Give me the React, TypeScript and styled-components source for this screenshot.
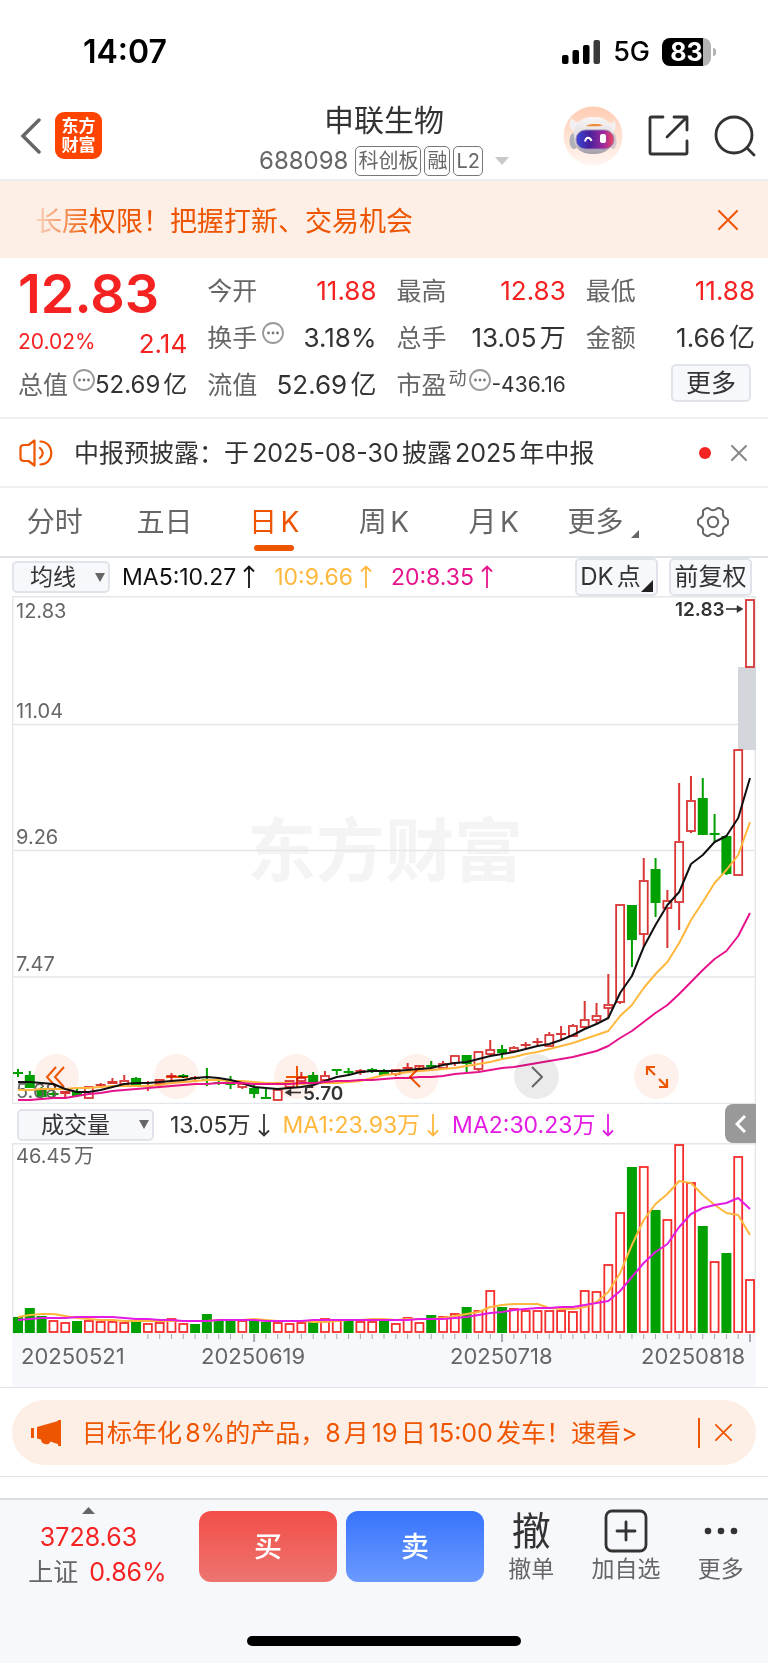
import React from 'react';
import styled, { createGlobalStyle } from 'styled-components';

const color = {
  orange: '#ee5500',
  peach: '#fdeee6',
  red: '#f52222',
  ink: '#333333',
  grey: '#666666',
  line: '#e4e6ea',
  panel: '#f7f8fb',
  amber: '#ffb83d',
  pink: '#e6148c',
  violet: '#e31be3',
  up: '#d93636',
  upBar: '#f52d2d',
  down: '#00a000',
};

const fontStack = "Inter, 'Noto Sans CJK SC', sans-serif";

const GlobalStyle = createGlobalStyle`
  *, *::before, *::after { box-sizing: border-box; }
  body {
    margin: 0;
    background: #fff;
    color: ${color.ink};
    font-family: ${fontStack};
    text-autospace: normal;
  }
  button, select {
    font-family: inherit;
    color: inherit;
    border: 0;
    background: none;
    padding: 0;
    margin: 0;
  }
  svg { display: block; flex: none; }
  h1, p, dl, dt, dd { margin: 0; font-weight: 400; }
`;

const Page = styled.div`
  display: flex;
  flex-direction: column;
  width: 100%;
`;

/* ---------- status bar ---------- */

const StatusBar = styled.div`
  display: flex;
  align-items: center;
  justify-content: space-between;
  height: 98px;
  padding: 6px 52px 0 83px;
  color: #000;
`;

const Clock = styled.span`
  font-size: 32px;
  line-height: 40px;
  font-weight: 600;
`;

const StatusIcons = styled.div`
  display: flex;
  align-items: center;
  gap: 12px;
`;

const Network = styled.span`
  font-size: 27px;
  line-height: 32px;
  font-weight: 500;
`;

const Battery = styled.div`
  display: flex;
  align-items: center;
  gap: 2px;
`;

const BatteryBody = styled.span`
  width: 49px;
  height: 28px;
  border-radius: 8px;
  background: linear-gradient(90deg, #000 83%, #b3b3b3 83%);
  color: #fff;
  font-size: 25px;
  line-height: 28px;
  font-weight: 700;
  text-align: center;
`;

const BatteryTip = styled.span`
  width: 3px;
  height: 8px;
  border-radius: 0 4px 4px 0;
  background: #b3b3b3;
`;

/* ---------- header ---------- */

const Header = styled.header`
  display: grid;
  grid-template-columns: 1fr auto 1fr;
  align-items: center;
  height: 83px;
  padding: 0 12px;
  border-bottom: 2px solid #ebedf0;
`;

const HeaderSide = styled.div<{ $end?: boolean }>`
  display: flex;
  align-items: center;
  justify-content: ${(p) => (p.$end ? 'flex-end' : 'flex-start')};
  gap: ${(p) => (p.$end ? '25px' : '14px')};
  padding: 0 0 6px ${(p) => (p.$end ? '0' : '8px')};
`;

const IconButton = styled.button`
  display: flex;
  align-items: center;
  justify-content: center;
  flex: none;
  cursor: pointer;
`;

const Logo = styled.a`
  display: grid;
  place-content: center;
  width: 47px;
  height: 47px;
  border-radius: 9px;
  background: #ff4400;
  color: #fff;
  font-size: 17px;
  line-height: 19px;
  font-weight: 700;
  text-align: center;
  text-decoration: none;
`;

const TitleBlock = styled.div`
  display: flex;
  flex-direction: column;
  align-items: center;
  gap: 7px;
`;

const StockName = styled.h1`
  font-size: 30px;
  line-height: 38px;
`;

const CodeRow = styled.div`
  display: flex;
  align-items: center;
  gap: 3px;
  color: ${color.grey};
  font-size: 24px;
  line-height: 30px;
`;

const Code = styled.span`
  margin-right: 4px;
`;

const Badge = styled.span`
  padding: 0 2px;
  border: 1px solid #777;
  border-radius: 5px;
  font-size: 20px;
  line-height: 28px;
`;

const CodeArrow = styled.svg`
  margin-left: 9px;
`;

/* ---------- promotional marquee ---------- */

const Marquee = styled.div`
  display: flex;
  align-items: center;
  justify-content: space-between;
  height: 77px;
  padding: 0 30px 0 35px;
  background: ${color.peach};
  color: ${color.orange};
`;

const MarqueeText = styled.p`
  font-size: 27px;
  line-height: 40px;
  padding-top: 4px;
  mask-image: linear-gradient(90deg, rgba(0, 0, 0, 0.15), #000 56px);
`;

/* ---------- quote ---------- */

const Quote = styled.section`
  display: grid;
  grid-template-columns: repeat(4, minmax(0, 1fr));
  column-gap: 20px;
  padding: 9px 13px 9px 18px;
  border-bottom: 2px solid #eef0f2;
`;

const QuoteColumn = styled.dl`
  display: flex;
  flex-direction: column;
`;

const Cell = styled.div`
  display: flex;
  align-items: center;
  justify-content: space-between;
  height: 47px;
`;

const Label = styled.dt<{ $tight?: boolean }>`
  display: flex;
  align-items: center;
  gap: ${(p) => (p.$tight ? '2px' : '5px')};
  color: ${color.grey};
  font-size: 25px;
  line-height: 36px;
  white-space: nowrap;
`;

const valueSize = { small: '21px', medium: '24px', large: '26px' };

const Value = styled.dd<{ $up?: boolean; $size?: keyof typeof valueSize }>`
  color: ${(p) => (p.$up ? color.red : color.ink)};
  font-size: ${(p) => valueSize[p.$size ?? 'large']};
  line-height: 36px;
  white-space: nowrap;
`;

const Price = styled.div`
  height: 54px;
  color: ${color.red};
  font-size: 54px;
  line-height: 54px;
  font-weight: 600;
`;

const Change = styled.div`
  display: flex;
  align-items: center;
  justify-content: space-between;
  height: 40px;
  color: ${color.red};
  font-size: 21px;
`;

const ChangeAmount = styled.span`
  padding-top: 6px;
  font-size: 26px;
  line-height: 30px;
`;

const Sup = styled.small`
  align-self: flex-start;
  font-size: 18px;
  line-height: 24px;
`;

const InfoIcon = styled.svg`
  margin-bottom: 10px;
`;

const MoreButton = styled.button`
  width: 80px;
  height: 38px;
  margin: 0 4px 4px auto;
  border: 2px solid #e0e4ea;
  border-radius: 5px;
  background: ${color.panel};
  font-size: 25px;
  line-height: 34px;
`;

/* ---------- notice ---------- */

const Notice = styled.div`
  display: flex;
  align-items: center;
  height: 69px;
  padding: 0 21px 0 19px;
  border-bottom: 2px solid #eef0f2;
`;

const NoticeText = styled.p`
  flex: 1;
  padding-left: 21px;
  font-size: 25px;
  line-height: 36px;
`;

const Dot = styled.span`
  width: 12px;
  height: 12px;
  margin-right: 20px;
  border-radius: 50%;
  background: ${color.red};
`;

/* ---------- period tabs ---------- */

const Tabs = styled.nav`
  display: grid;
  grid-template-columns: repeat(7, minmax(0, 1fr));
  height: 70px;
  border-bottom: 2px solid #dfe2e8;
`;

const Tab = styled.button<{ $active?: boolean }>`
  position: relative;
  display: flex;
  align-items: center;
  justify-content: center;
  gap: 8px;
  color: ${(p) => (p.$active ? color.orange : color.grey)};
  font-size: 28px;
  line-height: 40px;
  &::after {
    content: '';
    display: ${(p) => (p.$active ? 'block' : 'none')};
    position: absolute;
    bottom: 5px;
    left: calc(50% - 20px);
    width: 40px;
    height: 6px;
    border-radius: 3px;
    background: ${color.orange};
  }
`;

const Corner = styled.span<{ $dark?: boolean }>`
  align-self: flex-end;
  width: 0;
  height: 0;
  border-left: ${(p) => (p.$dark ? '12px' : '8px')} solid transparent;
  border-bottom: ${(p) => (p.$dark ? '12px' : '8px')} solid
    ${(p) => (p.$dark ? '#222' : color.grey)};
  margin-bottom: ${(p) => (p.$dark ? '2px' : '18px')};
`;

/* ---------- indicator rows ---------- */

const IndicatorRow = styled.section<{ $volume?: boolean }>`
  display: flex;
  align-items: center;
  height: ${(p) => (p.$volume ? '39px' : '38px')};
  margin: 0 12px;
`;

const SelectWrap = styled.label<{ $wide?: boolean }>`
  display: flex;
  align-items: center;
  position: relative;
  width: ${(p) => (p.$wide ? '137px' : '98px')};
  margin: ${(p) => (p.$wide ? '2px 16px 0 5px' : '0 12px 0 0')};
`;

const Select = styled.select<{ $wide?: boolean }>`
  appearance: none;
  width: 100%;
  height: 32px;
  padding-left: ${(p) => (p.$wide ? '22px' : '16px')};
  border: 2px solid #e0e4ea;
  border-radius: 5px;
  background: ${color.panel};
  font-size: 23px;
  line-height: 28px;
`;

const SelectArrow = styled.svg`
  position: absolute;
  right: 5px;
  pointer-events: none;
`;

const Reading = styled.span<{ $tone: string }>`
  display: flex;
  align-items: center;
  gap: 7px;
  margin-right: 19px;
  color: ${(p) => p.$tone};
  font-size: 23px;
  line-height: 32px;
  white-space: nowrap;
  text-autospace: no-autospace;
`;

const VolumeReading = styled(Reading)`
  margin-right: 13px;
  padding-top: 3px;
`;

const RowActions = styled.div`
  display: flex;
  gap: 11px;
  margin: 0 4px 0 auto;
`;

const ChipButton = styled.button`
  display: flex;
  align-items: center;
  justify-content: center;
  width: 83px;
  height: 38px;
  border: 2px solid #e0e4ea;
  border-radius: 5px;
  background: ${color.panel};
  font-size: 24px;
  line-height: 34px;
  white-space: nowrap;
`;

const CollapseButton = styled.button`
  display: flex;
  align-items: center;
  justify-content: center;
  width: 31px;
  height: 39px;
  margin-left: auto;
  border-radius: 8px 0 0 8px;
  background: #999;
`;

/* ---------- charts ---------- */

const ChartFrame = styled.div`
  position: relative;
  margin: 0 12px;
`;

const Drawing = styled.svg`
  width: 100%;
  height: auto;
  font-family: ${fontStack};
`;

const FloatBar = styled.div`
  position: absolute;
  left: 22px;
  right: 77px;
  bottom: 5px;
  display: flex;
  justify-content: space-between;
  mix-blend-mode: multiply;
`;

const FloatButton = styled.button<{ $muted?: boolean }>`
  display: flex;
  align-items: center;
  justify-content: center;
  width: 45px;
  height: 45px;
  border-radius: 50%;
  background: ${(p) => (p.$muted ? '#ebebeb' : '#fef1eb')};
`;

/* ---------- product promotion ---------- */

const PromoSection = styled.section`
  padding: 12px 12px 11px;
  border-top: 1px solid #dfe2e6;
  border-bottom: 1px solid #dfe2e6;
`;

const Promo = styled.div`
  display: flex;
  align-items: center;
  height: 65px;
  padding: 0 24px 0 19px;
  border-radius: 33px;
  background: ${color.peach};
  color: ${color.orange};
`;

const PromoText = styled.a`
  flex: 1;
  padding-left: 19px;
  color: inherit;
  font-size: 25px;
  line-height: 36px;
  text-decoration: none;
  white-space: nowrap;
`;

const PromoClose = styled(IconButton)`
  height: 30px;
  padding-left: 15px;
  border-left: 2px solid ${color.orange};
`;

/* ---------- bottom bar ---------- */

const BottomBar = styled.footer`
  margin-top: 21px;
  border-top: 2px solid #dcdfe3;
  background: ${color.panel};
`;

const Actions = styled.div`
  display: grid;
  grid-template-columns: 199px 1fr 284px;
  height: 92px;
`;

const IndexBox = styled.button`
  display: flex;
  flex-direction: column;
  align-items: center;
  padding: 7px 22px 0 0;
  font-size: 25px;
`;

const IndexLine = styled.span<{ $change?: boolean }>`
  display: flex;
  gap: 11px;
  padding: ${(p) => (p.$change ? '0 0 0 18px' : '6px 0 0')};
  line-height: 35px;
  color: ${color.red};
`;

const IndexName = styled.span`
  color: ${color.grey};
`;

const TradeGroup = styled.div`
  display: grid;
  grid-template-columns: 1fr 1fr;
  column-gap: 9px;
  padding-top: 11px;
`;

const TradeButton = styled.button<{ $sell?: boolean }>`
  height: 71px;
  border-radius: 12px;
  background: ${(p) =>
    p.$sell
      ? 'linear-gradient(180deg, #3875fc, #6b99ff)'
      : 'linear-gradient(180deg, #f44e48, #ec7570)'};
  color: #fff;
  font-size: 28px;
  line-height: 40px;
  font-weight: 500;
`;

const ToolGroup = styled.div`
  display: grid;
  grid-template-columns: repeat(3, 1fr);
`;

const ToolButton = styled.button`
  display: flex;
  flex-direction: column;
  align-items: center;
  padding-top: 8px;
  color: ${color.grey};
  font-size: 23px;
  line-height: 33px;
  white-space: nowrap;
`;

const ToolGlyph = styled.span`
  display: flex;
  align-items: center;
  height: 45px;
  color: ${color.ink};
  font-size: 39px;
`;

const HomeArea = styled.div`
  display: flex;
  justify-content: center;
  align-items: flex-end;
  height: 71px;
  padding-bottom: 17px;
`;

const HomeIndicator = styled.span`
  width: 274px;
  height: 10px;
  border-radius: 5px;
  background: #000;
`;

/* ---------- chart data ---------- */

const FIRST_X = 18;
const STEP = 732 / 62;
const xAt = (i: number) => FIRST_X + STEP * i;

type Kind = 'r' | 'g';
// kind, body top, body bottom, wick top, wick bottom
type Candle = [Kind, number, number, number, number];

const candles: Candle[] = [
  ['g', 1072, 1074, 1069, 1077], ['g', 1075, 1088, 1071, 1088], ['g', 1089, 1097, 1087, 1098],
  ['g', 1093, 1095, 1088, 1098], ['r', 1091, 1094, 1091, 1099], ['g', 1091, 1096, 1089, 1097],
  ['r', 1086, 1098, 1086, 1098], ['r', 1084, 1086, 1083, 1087], ['r', 1081, 1084, 1078, 1084],
  ['r', 1080, 1084, 1075, 1084], ['g', 1078, 1086, 1077, 1087], ['r', 1085, 1087, 1081, 1091],
  ['r', 1079, 1084, 1079, 1084], ['r', 1075, 1077, 1073, 1080], ['g', 1075, 1077, 1074, 1078],
  ['r', 1077, 1079, 1076, 1080], ['g', 1079, 1081, 1068, 1086], ['g', 1082, 1084, 1081, 1085],
  ['g', 1080, 1085, 1076, 1089], ['r', 1083, 1087, 1083, 1089], ['g', 1088, 1094, 1085, 1098],
  ['g', 1097, 1099, 1088, 1099], ['r', 1089, 1100, 1089, 1100], ['r', 1080, 1087, 1080, 1087],
  ['r', 1077, 1081, 1072, 1083], ['g', 1075, 1082, 1072, 1082], ['r', 1075, 1080, 1071, 1080],
  ['g', 1069, 1071, 1069, 1075], ['g', 1071, 1073, 1068, 1075], ['r', 1070, 1073, 1069, 1075],
  ['g', 1069, 1071, 1068, 1073], ['g', 1071, 1075, 1069, 1076], ['r', 1069, 1074, 1069, 1076],
  ['r', 1067, 1069, 1063, 1070], ['r', 1065, 1069, 1065, 1069], ['g', 1065, 1067, 1061, 1068],
  ['r', 1063, 1068, 1061, 1068], ['r', 1055, 1063, 1055, 1066], ['g', 1055, 1064, 1055, 1073],
  ['r', 1051, 1069, 1051, 1071], ['r', 1049, 1054, 1040, 1055], ['g', 1049, 1053, 1045, 1059],
  ['r', 1047, 1051, 1046, 1052], ['r', 1044, 1046, 1042, 1048], ['r', 1041, 1043, 1038, 1046],
  ['r', 1034, 1046, 1032, 1046], ['r', 1033, 1035, 1026, 1039], ['r', 1025, 1036, 1024, 1036],
  ['r', 1019, 1027, 1001, 1029], ['r', 1015, 1020, 1003, 1023], ['r', 1004, 1008, 974, 1018],
  ['r', 904, 1002, 904, 1004], ['g', 905, 940, 905, 967], ['r', 880, 934, 858, 947],
  ['g', 869, 903, 858, 917], ['r', 900, 908, 890, 948], ['r', 841, 902, 783, 930],
  ['r', 800, 831, 776, 833], ['g', 798, 835, 778, 835], ['g', 833, 835, 814, 843],
  ['g', 836, 874, 835, 875], ['r', 749, 875, 749, 875], ['r', 599, 667, 599, 667],
];

const ma5 = [
  1082, 1082, 1083, 1084, 1089, 1092, 1092, 1090, 1087, 1084, 1083, 1083, 1082, 1081, 1080, 1078,
  1077, 1078, 1080, 1083, 1087, 1088, 1089, 1088, 1087, 1085, 1081, 1077, 1075, 1072, 1071, 1071,
  1071, 1070, 1069, 1068, 1065, 1063, 1062, 1059, 1056, 1054, 1052, 1049, 1046, 1044, 1040, 1035,
  1029, 1024, 1018, 993, 976, 947, 925, 905, 892, 864, 855, 842, 836, 818, 778,
];
const ma10 = [
  1090, 1090, 1089, 1089, 1089, 1088, 1088, 1087, 1086, 1086, 1086, 1086, 1085, 1083, 1082, 1081,
  1080, 1080, 1081, 1081, 1082, 1083, 1083, 1083, 1084, 1083, 1083, 1083, 1082, 1081, 1078, 1075,
  1074, 1072, 1071, 1070, 1069, 1068, 1066, 1064, 1062, 1059, 1057, 1054, 1052, 1049, 1046, 1043,
  1039, 1035, 1031, 1016, 1005, 988, 974, 962, 943, 920, 902, 883, 870, 855, 822,
];
const ma20 = [
  1100, 1100, 1099, 1098, 1098, 1096, 1094, 1093, 1091, 1090, 1089, 1088, 1087, 1086, 1085, 1084,
  1084, 1083, 1083, 1083, 1084, 1084, 1084, 1084, 1083, 1083, 1082, 1081, 1081, 1080, 1080, 1079,
  1078, 1078, 1077, 1077, 1076, 1074, 1073, 1072, 1070, 1068, 1067, 1065, 1063, 1061, 1059, 1057,
  1054, 1051, 1046, 1038, 1031, 1022, 1013, 1005, 994, 982, 970, 959, 951, 936, 913,
];

const volumes = [
  1317, 1308, 1316, 1320, 1322, 1321, 1320, 1321, 1321, 1322, 1321, 1323, 1322, 1318, 1323, 1324,
  1314, 1321, 1321, 1320, 1321, 1322, 1322, 1323, 1322, 1321, 1318, 1320, 1320, 1321, 1321, 1320,
  1323, 1317, 1322, 1315, 1316, 1313, 1307, 1310, 1290, 1307, 1308, 1310, 1310, 1310, 1310, 1311,
  1290, 1291, 1264, 1212, 1167, 1166, 1210, 1219, 1144, 1182, 1226, 1261, 1253, 1156, 1279,
];
const volumeGreen = new Set([0, 1, 2, 5, 10, 15, 16, 17, 18, 20, 21, 25, 28, 31, 35, 38, 41, 52, 54, 58, 60]);
const volMa1 = [
  1317, 1315, 1314, 1314, 1316, 1318, 1319, 1320, 1320, 1321, 1321, 1321, 1321, 1321, 1321, 1321,
  1321, 1320, 1320, 1320, 1319, 1320, 1321, 1321, 1321, 1322, 1322, 1321, 1320, 1320, 1319, 1319,
  1320, 1319, 1319, 1319, 1318, 1316, 1314, 1312, 1307, 1305, 1304, 1304, 1304, 1308, 1309, 1309,
  1307, 1302, 1292, 1273, 1245, 1220, 1204, 1194, 1181, 1183, 1195, 1205, 1213, 1215, 1235,
];
const volMa2 = [
  1320, 1319, 1318, 1318, 1318, 1317, 1317, 1317, 1317, 1318, 1319, 1319, 1320, 1320, 1321, 1321,
  1321, 1320, 1320, 1320, 1320, 1321, 1321, 1321, 1321, 1320, 1320, 1320, 1320, 1320, 1320, 1320,
  1320, 1320, 1319, 1319, 1319, 1318, 1317, 1315, 1313, 1312, 1310, 1309, 1308, 1308, 1307, 1307,
  1305, 1303, 1301, 1291, 1277, 1263, 1252, 1244, 1227, 1214, 1208, 1205, 1203, 1198, 1209,
];

const toPoints = (ys: number[]) => ys.map((y, i) => `${xAt(i).toFixed(1)},${y}`).join(' ');

function Line({ ys, stroke }: { ys: number[]; stroke: string }) {
  return <polyline points={toPoints(ys)} fill="none" stroke={stroke} strokeWidth="2" strokeLinejoin="round" />;
}

function CandleMark({ index, candle }: { index: number; candle: Candle }) {
  const [kind, top, bottom, high, low] = candle;
  const x = xAt(index);
  if (kind === 'g') {
    return (
      <g fill={color.down}>
        <rect x={x - 1} y={high} width="2" height={low - high} />
        <rect x={x - 5} y={top} width="10" height={bottom - top} />
      </g>
    );
  }
  const flat = bottom - top < 4;
  return (
    <g fill={color.up}>
      <rect x={x - 1} y={high} width="2" height={Math.max(top - high, 0)} />
      <rect x={x - 1} y={bottom} width="2" height={Math.max(low - bottom, 0)} />
      {flat ? (
        <rect x={x - 5} y={top} width="10" height={bottom - top} />
      ) : (
        <rect x={x - 4} y={top + 1} width="8" height={bottom - top - 1} fill="none" stroke={color.up} strokeWidth="1.8" />
      )}
    </g>
  );
}

function PriceChart() {
  const labels: [string, number][] = [['12.83', 618], ['11.04', 718], ['9.26', 844], ['7.47', 971], ['5.68', 1098]];
  return (
    <Drawing viewBox="12 596 744 508" role="img" aria-label="日K线图">
      <text x="385" y="876" textAnchor="middle" fontSize="69" fontWeight="700" fill="#f4f4f5">东方财富</text>
      <g fill="none" stroke={color.line} strokeWidth="1.5">
        <path d="M12.7 1104V596.7H755.3V1104" />
        <path d="M12 724.5H756M12 850.5H756M12 977H756M12 1103.5H756" />
      </g>
      <rect x="738" y="667" width="18" height="83" fill="#d3d6db" />
      {candles.map((c, i) => (
        <CandleMark key={i} index={i} candle={c} />
      ))}
      <g fontSize="20" fill={color.grey}>
        {labels.map(([t, y]) => (
          <text key={t} x="16" y={y}>{t}</text>
        ))}
      </g>
      <Line ys={ma10} stroke={color.amber} />
      <Line ys={ma5} stroke="#111" />
      <Line ys={ma20} stroke={color.pink} />
      <g fontSize="19" fontWeight="600" fill={color.ink}>
        <text x="675" y="616">12.83</text>
        <text x="303" y="1100">5.70</text>
      </g>
      <g stroke={color.ink} strokeWidth="1.6" fill={color.ink}>
        <path d="M726 609H738" />
        <path d="M737 605.5L743 609L737 612.5Z" strokeWidth="0.5" />
        <path d="M290 1092.5H301" />
        <path d="M291 1089L285 1092.5L291 1096Z" strokeWidth="0.5" />
      </g>
    </Drawing>
  );
}

function VolumeChart() {
  const dates: [string, number][] = [['20250521', 21], ['20250619', 201], ['20250718', 450], ['20250818', 641]];
  return (
    <Drawing viewBox="12 1143 744 244" role="img" aria-label="成交量图">
      <rect x="12" y="1333" width="744" height="54" fill={color.panel} />
      <path d="M12.7 1333V1143.7H755.3V1333" fill="none" stroke={color.line} strokeWidth="1.5" />
      <text x="16" y="1163" fontSize="20" fill={color.grey}>46.45万</text>
      {volumes.map((top, i) =>
        volumeGreen.has(i) ? (
          <rect key={i} x={xAt(i) - 5} y={top} width="10" height={1333 - top} fill={color.down} />
        ) : (
          <rect key={i} x={xAt(i) - 4} y={top + 1} width="8" height={1331 - top} fill="none" stroke={color.upBar} strokeWidth="1.8" />
        ),
      )}
      <Line ys={volMa1} stroke={color.amber} />
      <Line ys={volMa2} stroke={color.violet} />
      <g fill="#a6a8ad">
        {volumes.map((_, i) => {
          const major = i === 20 || i === 41 || i === 62;
          return i < 11 ? null : <rect key={i} x={xAt(i) - (major ? 1 : 0.5)} y="1334" width={major ? 2 : 1} height={major ? 8 : 5} />;
        })}
      </g>
      <g fontSize="22" fill={color.grey}>
        {dates.map(([t, x]) => (
          <text key={t} x={x} y="1364">{t}</text>
        ))}
      </g>
    </Drawing>
  );
}

/* ---------- icons ---------- */

function Cross({ size, width }: { size: number; width: number }) {
  return (
    <svg width={size} height={size} viewBox="0 0 20 20" fill="none" stroke="currentColor" strokeWidth={width} strokeLinecap="round">
      <path d="M1 1L19 19M19 1L1 19" />
    </svg>
  );
}

function Arrow({ down }: { down?: boolean }) {
  return (
    <svg width="12" height="24" viewBox="0 0 12 24" fill="none" stroke="currentColor" strokeWidth="1.8">
      <path d={down ? 'M6 1V23M1 17.5L6 22.5L11 17.5' : 'M6 23V1M1 6.5L6 1.5L11 6.5'} />
    </svg>
  );
}

function Caret() {
  return (
    <SelectArrow width="10" height="9" viewBox="0 0 10 9" fill={color.grey}>
      <path d="M0 0H10L5 9Z" />
    </SelectArrow>
  );
}

function Info() {
  return (
    <InfoIcon width="22" height="22" viewBox="0 0 22 22" fill="none" stroke="#999" strokeWidth="1.8">
      <circle cx="11" cy="11" r="10" />
      <g fill="#777" stroke="none">
        <circle cx="6.5" cy="11" r="1.4" />
        <circle cx="11" cy="11" r="1.4" />
        <circle cx="15.5" cy="11" r="1.4" />
      </g>
    </InfoIcon>
  );
}

function Robot() {
  return (
    <svg width="60" height="60" viewBox="0 0 60 60">
      <defs>
        <linearGradient id="halo" x1="0" y1="0" x2="0" y2="1">
          <stop offset="0" stopColor="#ffccb3" />
          <stop offset="1" stopColor="#fff6f2" />
        </linearGradient>
        <linearGradient id="visor" x1="0" y1="0" x2="1" y2="0">
          <stop offset="0" stopColor="#3b49d8" />
          <stop offset="0.35" stopColor="#45209a" />
          <stop offset="0.75" stopColor="#a52a9b" />
          <stop offset="1" stopColor="#f0485a" />
        </linearGradient>
        <linearGradient id="shell" x1="0" y1="0" x2="0" y2="1">
          <stop offset="0" stopColor="#f8f5f5" />
          <stop offset="0.6" stopColor="#dfdbdf" />
          <stop offset="1" stopColor="#a09ca8" />
        </linearGradient>
      </defs>
      <circle cx="30" cy="30" r="29.5" fill="url(#halo)" />
      <ellipse cx="11" cy="35" rx="4.5" ry="8" fill="#b0b0b8" />
      <ellipse cx="50" cy="35" rx="3.5" ry="8" fill="#d8c8cc" />
      <path d="M9 12C5 17 6 22 11 25L20 14C14 17 11 16 9 12ZM51 14C54 19 53 24 49 27L42 14C47 18 50 18 51 14Z" fill="#f3f0f1" />
      <path d="M30 11C42 10 50 17 50 30C51 42 43 48 30 48C17 48 11 42 11 31C10 18 18 11 30 11Z" fill="url(#shell)" />
      <path d="M23 20C27 17.5 36 17.5 40 19.5C36 20.5 28 20.5 23 20Z" fill="#f18a35" />
      <rect x="13" y="24" width="38" height="19" rx="9.5" fill="url(#visor)" stroke="#9f86b5" strokeWidth="1" />
      <path d="M22 35.5C23 30.5 27 30.5 28.5 35" fill="none" stroke="#fff" strokeWidth="2" />
      <rect x="37" y="28" width="6" height="9" rx="2" fill="#fff" />
    </svg>
  );
}

export default function App() {
  return (
    <>
      <GlobalStyle />
      <Page>
        <StatusBar>
          <Clock>14:07</Clock>
          <StatusIcons>
            <svg width="39" height="25" viewBox="0 0 39 25">
              <rect x="0" y="15" width="6.5" height="9" rx="2" />
              <rect x="10.5" y="10" width="6.5" height="14" rx="2" />
              <rect x="21" y="5" width="6.5" height="19" rx="2" />
              <rect x="31.5" y="0" width="6.5" height="24" rx="2" fill="#3a3a3a" />
            </svg>
            <Network>5G</Network>
            <Battery>
              <BatteryBody>83</BatteryBody>
              <BatteryTip />
            </Battery>
          </StatusIcons>
        </StatusBar>

        <Header>
          <HeaderSide>
            <IconButton aria-label="返回">
              <svg width="21" height="36" viewBox="0 0 21 36" fill="none" stroke="#666" strokeWidth="3.5" strokeLinecap="round">
                <path d="M19 2L3 18L19 34" />
              </svg>
            </IconButton>
            <Logo href="#">东方<br />财富</Logo>
          </HeaderSide>
          <TitleBlock>
            <StockName>申联生物</StockName>
            <CodeRow>
              <Code>688098</Code>
              <Badge>科创板</Badge>
              <Badge>融</Badge>
              <Badge>L2</Badge>
              <CodeArrow width="14" height="8" viewBox="0 0 14 8" fill="#c8c8c8">
                <path d="M0 0H14L7 8Z" />
              </CodeArrow>
            </CodeRow>
          </TitleBlock>
          <HeaderSide $end>
            <IconButton aria-label="智能助手"><Robot /></IconButton>
            <IconButton aria-label="分享">
              <svg width="41" height="41" viewBox="0 0 41 41" fill="none" stroke="#333" strokeWidth="2.8" strokeLinecap="round" strokeLinejoin="round">
                <path d="M15 2H3.5Q2 2 2 3.5V37.5Q2 39 3.5 39H37.5Q39 39 39 37.5V26M26 2H39V15M39 2L19 22" />
              </svg>
            </IconButton>
            <IconButton aria-label="搜索">
              <svg width="42" height="42" viewBox="0 0 42 42" fill="none" stroke="#333" strokeWidth="2.8" strokeLinecap="round">
                <circle cx="20" cy="20" r="18" />
                <path d="M33 33L40 40" />
              </svg>
            </IconButton>
          </HeaderSide>
        </Header>

        <Marquee>
          <MarqueeText>长层权限！把握打新、交易机会</MarqueeText>
          <IconButton aria-label="关闭"><Cross size={20} width={2} /></IconButton>
        </Marquee>

        <Quote>
          <div>
            <Price>12.83</Price>
            <Change>
              <span>20.02%</span>
              <ChangeAmount>2.14</ChangeAmount>
            </Change>
            <Cell as="dl">
              <Label>总值<Info /></Label>
              <Value $size="medium">52.69亿</Value>
            </Cell>
          </div>
          <QuoteColumn>
            <Cell><Label>今开</Label><Value $up>11.88</Value></Cell>
            <Cell><Label>换手<Info /></Label><Value>3.18%</Value></Cell>
            <Cell><Label>流值</Label><Value>52.69亿</Value></Cell>
          </QuoteColumn>
          <QuoteColumn>
            <Cell><Label>最高</Label><Value $up>12.83</Value></Cell>
            <Cell><Label>总手</Label><Value>13.05万</Value></Cell>
            <Cell>
              <Label $tight>市盈<Sup>动</Sup><Info /></Label>
              <Value $size="small">-436.16</Value>
            </Cell>
          </QuoteColumn>
          <div>
            <QuoteColumn>
              <Cell><Label>最低</Label><Value $up>11.88</Value></Cell>
              <Cell><Label>金额</Label><Value>1.66亿</Value></Cell>
            </QuoteColumn>
            <Cell><MoreButton>更多</MoreButton></Cell>
          </div>
        </Quote>

        <Notice>
          <svg width="34" height="28" viewBox="0 0 34 28" fill="none" stroke={color.orange} strokeWidth="2.2" strokeLinecap="round" strokeLinejoin="round">
            <path d="M15.5 1.5L9.5 6H5Q1.5 6 1.5 9V19Q1.5 22 5 22H9.5L15.5 26.5Z" />
            <path d="M21 9Q26.5 14 21 19M21.5 2.5C36 3 36 25 21.5 25.5" />
          </svg>
          <NoticeText>中报预披露：于2025-08-30披露2025年中报</NoticeText>
          <Dot />
          <IconButton aria-label="关闭">
            <svg width="16" height="16" viewBox="0 0 16 16" stroke="#888" strokeWidth="2" strokeLinecap="round">
              <path d="M1 1L15 15M15 1L1 15" />
            </svg>
          </IconButton>
        </Notice>

        <Tabs>
          <Tab>分时</Tab>
          <Tab>五日</Tab>
          <Tab $active>日K</Tab>
          <Tab>周K</Tab>
          <Tab>月K</Tab>
          <Tab>更多<Corner /></Tab>
          <Tab aria-label="设置">
            <svg width="32" height="32" viewBox="0 0 32 32" fill="none" stroke="#666" strokeWidth="2" strokeLinejoin="round">
              <path d="M9.5 2.2Q11 1.4 12.3 2.8Q16 5.6 19.7 2.8Q21 1.4 22.5 2.2L25.3 3.9Q26.4 4.7 26 6.3Q25.3 10.8 29 12.3Q30.9 13 31 14.3V17.7Q30.9 19 29 19.7Q25.3 21.2 26 25.7Q26.4 27.3 25.3 28.1L22.5 29.8Q21 30.6 19.7 29.2Q16 26.4 12.3 29.2Q11 30.6 9.5 29.8L6.7 28.1Q5.6 27.3 6 25.7Q6.7 21.2 3 19.7Q1.1 19 1 17.7V14.3Q1.1 13 3 12.3Q6.7 10.8 6 6.3Q5.6 4.7 6.7 3.9Z" />
              <circle cx="16" cy="16" r="5.2" />
            </svg>
          </Tab>
        </Tabs>

        <IndicatorRow>
          <SelectWrap>
            <Select aria-label="主图指标" defaultValue="ma"><option value="ma">均线</option></Select>
            <Caret />
          </SelectWrap>
          <Reading $tone="#111">MA5:10.27<Arrow /></Reading>
          <Reading $tone={color.amber}>10:9.66<Arrow /></Reading>
          <Reading $tone={color.pink}>20:8.35<Arrow /></Reading>
          <RowActions>
            <ChipButton>DK点<Corner $dark /></ChipButton>
            <ChipButton>前复权</ChipButton>
          </RowActions>
        </IndicatorRow>

        <ChartFrame>
          <PriceChart />
          <FloatBar>
            <FloatButton aria-label="最早">
              <svg width="24" height="22" viewBox="0 0 24 22" fill="none" stroke={color.orange} strokeWidth="2"><path d="M11 1L2 11L11 21M19 1L10 11L19 21" /></svg>
            </FloatButton>
            <FloatButton aria-label="缩小">
              <svg width="22" height="2" viewBox="0 0 22 2" fill={color.orange}><path d="M0 0H22V2H0Z" /></svg>
            </FloatButton>
            <FloatButton aria-label="放大">
              <svg width="22" height="22" viewBox="0 0 22 22" stroke={color.orange} strokeWidth="2"><path d="M11 0V22M0 11H22" /></svg>
            </FloatButton>
            <FloatButton aria-label="左移">
              <svg width="16" height="22" viewBox="0 0 16 22" fill="none" stroke={color.orange} strokeWidth="2"><path d="M11 1L1 11L11 21" /></svg>
            </FloatButton>
            <FloatButton $muted aria-label="右移">
              <svg width="12" height="22" viewBox="0 0 12 22" fill="none" stroke="#666" strokeWidth="2"><path d="M1 1L11 11L1 21" /></svg>
            </FloatButton>
            <FloatButton aria-label="全屏">
              <svg width="24" height="24" viewBox="0 0 24 24" fill="none" stroke={color.orange} strokeWidth="2.2"><path d="M2 10V2H10M2 2L10 10M22 14V22H14M22 22L14 14" /></svg>
            </FloatButton>
          </FloatBar>
        </ChartFrame>

        <IndicatorRow $volume>
          <SelectWrap $wide>
            <Select $wide aria-label="副图指标" defaultValue="vol"><option value="vol">成交量</option></Select>
            <Caret />
          </SelectWrap>
          <VolumeReading $tone={color.ink}>13.05万<Arrow down /></VolumeReading>
          <VolumeReading $tone={color.amber}>MA1:23.93万<Arrow down /></VolumeReading>
          <VolumeReading $tone={color.violet}>MA2:30.23万<Arrow down /></VolumeReading>
          <CollapseButton aria-label="收起">
            <svg width="11" height="18" viewBox="0 0 11 18" fill="none" stroke="#fff" strokeWidth="3"><path d="M10 1L2 9L10 17" /></svg>
          </CollapseButton>
        </IndicatorRow>

        <ChartFrame>
          <VolumeChart />
        </ChartFrame>

        <PromoSection>
          <Promo>
            <svg width="32" height="26" viewBox="0 0 32 26" fill={color.orange}>
              <path d="M0 8H3V18H0ZM6 7L27 1V0H30V26H27V24L19 21.5V22.5Q18 25 14 24Q10 23 10 19.5L6 18.5Z" />
            </svg>
            <PromoText href="#">目标年化8%的产品，8月19日15:00发车！速看&gt;</PromoText>
            <PromoClose aria-label="关闭"><Cross size={17} width={2} /></PromoClose>
          </Promo>
        </PromoSection>

        <BottomBar>
          <Actions>
            <IndexBox>
              <svg width="13" height="7" viewBox="0 0 13 7" fill="#666"><path d="M6.5 0L13 7H0Z" /></svg>
              <IndexLine>3728.63</IndexLine>
              <IndexLine $change><IndexName>上证</IndexName>0.86%</IndexLine>
            </IndexBox>
            <TradeGroup>
              <TradeButton>买</TradeButton>
              <TradeButton $sell>卖</TradeButton>
            </TradeGroup>
            <ToolGroup>
              <ToolButton><ToolGlyph>撤</ToolGlyph>撤单</ToolButton>
              <ToolButton>
                <ToolGlyph>
                  <svg width="44" height="44" viewBox="0 0 44 44" fill="none" stroke="#333" strokeWidth="2.8" strokeLinecap="round">
                    <rect x="2" y="2" width="40" height="40" rx="6" />
                    <path d="M22 13V31M13 22H31" />
                  </svg>
                </ToolGlyph>
                加自选
              </ToolButton>
              <ToolButton>
                <ToolGlyph>
                  <svg width="34" height="8" viewBox="0 0 34 8" fill="#333">
                    <circle cx="4" cy="4" r="3.3" /><circle cx="17" cy="4" r="3.3" /><circle cx="30" cy="4" r="3.3" />
                  </svg>
                </ToolGlyph>
                更多
              </ToolButton>
            </ToolGroup>
          </Actions>
          <HomeArea><HomeIndicator /></HomeArea>
        </BottomBar>
      </Page>
    </>
  );
}
